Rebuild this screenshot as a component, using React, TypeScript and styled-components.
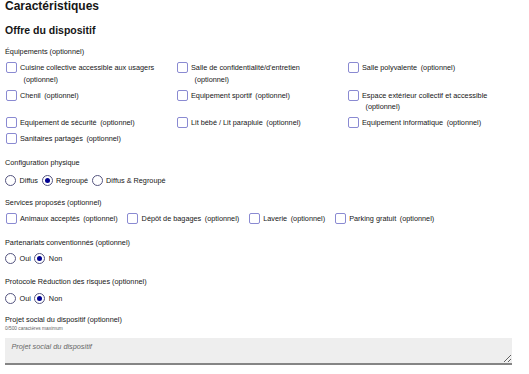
import React from 'react';
import styled, { createGlobalStyle } from 'styled-components';

const GlobalStyle = createGlobalStyle`
  body {
    margin: 0;
    background: #ffffff;
    color: #161616;
    font-family: "Liberation Sans", Arial, sans-serif;
  }
`;

const Page = styled.div`
  width: 507px;
  padding: 0 5px;
`;

const Title = styled.h1`
  margin: -1px 0 0;
  font-size: 12px;
  line-height: 14px;
  font-weight: 700;
`;

const SubTitle = styled.h2`
  margin: 10px 0 0;
  font-size: 10.5px;
  line-height: 14px;
  font-weight: 700;
`;

const Group = styled.div<{ $top: number }>`
  margin-top: ${(p) => p.$top}px;
`;

const Legend = styled.div<{ $gap?: number }>`
  font-size: 7.3px;
  line-height: 10px;
  margin-bottom: ${(p) => p.$gap ?? 5.25}px;
`;

const CheckGrid = styled.div`
  display: grid;
  grid-template-columns: 171px 171px 1fr;
  row-gap: 4.5px;
  align-items: start;
`;

const InlineRow = styled.div<{ $gap: number }>`
  display: flex;
  align-items: flex-start;
  column-gap: ${(p) => p.$gap}px;
`;

const Item = styled.label<{ $pad?: number }>`
  display: flex;
  align-items: flex-start;
  column-gap: 3.5px;
  font-size: 7.3px;
  line-height: 11.5px;
  padding-right: ${(p) => p.$pad ?? 8}px;
`;

const Box = styled.span`
  flex: none;
  box-sizing: border-box;
  width: 11px;
  height: 11px;
  margin-left: 0.5px;
  border: 1px solid #8a8ad2;
  border-radius: 2px;
  background: #ffffff;
`;

const Radio = styled.span<{ $checked?: boolean }>`
  flex: none;
  position: relative;
  box-sizing: border-box;
  width: 11px;
  height: 11px;
  border: 1px solid #55557f;
  border-radius: 50%;
  background: #ffffff;

  &::after {
    content: '';
    display: ${(p) => (p.$checked ? 'block' : 'none')};
    position: absolute;
    top: 2px;
    left: 2px;
    width: 5px;
    height: 5px;
    border-radius: 50%;
    background: #000091;
  }
`;

const Text = styled.span``;

const Hint = styled.span`
  display: inline-block;
  margin-left: 3.5px;
`;

const Counter = styled.div`
  margin-top: 1px;
  font-size: 4.8px;
  line-height: 6px;
  color: #666666;
`;

const TextArea = styled.textarea`
  display: block;
  box-sizing: border-box;
  width: 507px;
  height: 27px;
  margin-top: 6.25px;
  padding: 4px 6.5px;
  border: none;
  border-bottom: 2px solid #858585;
  border-radius: 0;
  background: #eeeeee;
  font-family: "Liberation Sans", Arial, sans-serif;
  font-size: 7.3px;
  line-height: 10px;
  color: #161616;
  outline: none;

  &::placeholder {
    color: #666666;
    font-style: italic;
  }
`;

type Option = { label: string; optional?: boolean; pad?: number };

const equipements: Option[] = [
  { label: 'Cuisine collective accessible aux usagers', optional: true },
  { label: "Salle de confidentialité/d'entretien", optional: true },
  { label: 'Salle polyvalente', optional: true },
  { label: 'Chenil', optional: true },
  { label: 'Equipement sportif', optional: true },
  { label: 'Espace extérieur collectif et accessible', optional: true },
  { label: 'Equipement de sécurité', optional: true },
  { label: 'Lit bébé / Lit parapluie', optional: true },
  { label: 'Equipement informatique', optional: true },
  { label: 'Sanitaires partagés', optional: true },
];

const services: Option[] = [
  { label: 'Animaux acceptés', optional: true },
  { label: 'Dépôt de bagages', optional: true },
  { label: 'Laverie', optional: true },
  { label: 'Parking gratuit', optional: true },
];

const CheckOption = ({ label, optional, pad }: Option) => (
  <Item $pad={pad}>
    <Box />
    <Text>
      {label}
      {optional && <Hint>(optionnel)</Hint>}
    </Text>
  </Item>
);

const RadioGroup = ({ options, value }: { options: string[]; value: string }) => (
  <InlineRow $gap={0}>
    {options.map((o) => (
      <Item key={o} $pad={3.5}>
        <Radio $checked={o === value} />
        <Text>{o}</Text>
      </Item>
    ))}
  </InlineRow>
);

const App = () => (
  <>
    <GlobalStyle />
    <Page>
      <Title>Caractéristiques</Title>
      <SubTitle>Offre du dispositif</SubTitle>

      <Group $top={10}>
        <Legend>Équipements (optionnel)</Legend>
        <CheckGrid>
          {equipements.map((e) => (
            <CheckOption key={e.label} {...e} pad={14} />
          ))}
        </CheckGrid>
      </Group>

      <Group $top={13}>
        <Legend $gap={7.25}>Configuration physique</Legend>
        <RadioGroup options={['Diffus', 'Regroupé', 'Diffus & Regroupé']} value="Regroupé" />
      </Group>

      <Group $top={11.25}>
        <Legend>Services proposés (optionnel)</Legend>
        <InlineRow $gap={1}>
          {services.map((s) => (
            <CheckOption key={s.label} {...s} />
          ))}
        </InlineRow>
      </Group>

      <Group $top={13.25}>
        <Legend>Partenariats conventionnés (optionnel)</Legend>
        <RadioGroup options={['Oui', 'Non']} value="Non" />
      </Group>

      <Group $top={12.25}>
        <Legend $gap={6.25}>Protocole Réduction des risques (optionnel)</Legend>
        <RadioGroup options={['Oui', 'Non']} value="Non" />
      </Group>

      <Group $top={10.25}>
        <Legend $gap={0}>Projet social du dispositif (optionnel)</Legend>
        <Counter>0/500 caractères maximum</Counter>
        <TextArea placeholder="Projet social du dispositif" />
      </Group>
    </Page>
  </>
);

export default App;
